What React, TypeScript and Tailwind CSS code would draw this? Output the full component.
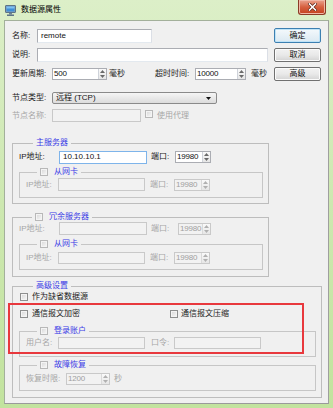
import React from "react";

const Check = ({ disabled = false }: { disabled?: boolean }) => (
  <span
    className={`inline-block w-[8px] h-[8px] shrink-0 border ${
      disabled ? "border-[#b8b8b8]" : "border-[#8e8f8f]"
    } bg-linear-to-br from-[#d6d6d6] to-[#fafafa] shadow-[inset_0_0_0_1px_#f4f4f4]`}
  />
);

const Arrow = ({ up, color }: { up: boolean; color: string }) => (
  <svg width="5" height="3" viewBox="0 0 5 3">
    {up ? <path d="M0 3 L2.5 0 L5 3 Z" fill={color} /> : <path d="M0 0 L2.5 3 L5 0 Z" fill={color} />}
  </svg>
);

const Spin = ({ w, value, disabled = false }: { w: string; value: string; disabled?: boolean }) => (
  <div
    className={`flex h-[12px] border ${w} ${
      disabled ? "border-[#c9c9c9] bg-[#f2f2f2] text-[#a0a0a0]" : "border-[#abadb3] bg-white text-[#111]"
    }`}
  >
    <span className="flex-1 flex items-center pl-[1px] leading-none overflow-hidden whitespace-nowrap tracking-[-0.2px]">{value}</span>
    <span className={`w-[8px] shrink-0 flex flex-col border-l ${disabled ? "border-[#dadada]" : "border-[#cfd3da]"} bg-linear-to-b from-[#fafafa] to-[#e6e6e6]`}>
      <span className="flex-1 flex items-center justify-center">
        <Arrow up color={disabled ? "#b0b0b0" : "#6a6a6a"} />
      </span>
      <span className="flex-1 flex items-center justify-center">
        <Arrow up={false} color={disabled ? "#b0b0b0" : "#6a6a6a"} />
      </span>
    </span>
  </div>
);

const Input = ({ w, h = "h-[13px]", value = "", disabled = false, focus = false }: { w: string; h?: string; value?: string; disabled?: boolean; focus?: boolean }) => (
  <div
    className={`${w} ${h} flex items-center pl-[3px] border leading-none ${
      disabled
        ? "border-[#c9c9c9] bg-[#f2f2f2]"
        : focus
        ? "border-[#7eb4ea] bg-white text-[#111]"
        : "border-[#abadb3] border-b-[#e3e9ef] border-r-[#dbdfe6] bg-white text-[#111]"
    }`}
  >
    {value}
  </div>
);

const Btn = ({ label, h, primary = false }: { label: string; h: string; primary?: boolean }) => (
  <div
    className={`ml-auto w-[47px] ${h} flex items-center justify-center rounded-[2px] border leading-none text-[#111] ${
      primary
        ? "border-[#3c7fb1] shadow-[inset_0_0_0_1px_#bfe3f7] bg-linear-to-b from-[#f4f9fc] to-[#dbe9f2]"
        : "border-[#707070] shadow-[inset_0_0_0_1px_#fbfbfb] bg-linear-to-b from-[#f2f2f2] via-[#e9e9e9] to-[#d3d3d3]"
    }`}
  >
    {label}
  </div>
);

const Label = ({ w, text, disabled = false }: { w: string; text: string; disabled?: boolean }) => (
  <span className={`${w} shrink-0 leading-none whitespace-nowrap ${disabled ? "text-[#a6a6a6]" : "text-[#1a1a1a]"}`}>{text}</span>
);

export default function App() {
  return (
    <div className="relative w-[333px] h-[408px] flex flex-col overflow-hidden bg-linear-to-b from-[#dcefc8] via-[#cde8b0] to-[#c2e39e] text-[8px] font-['Liberation_Sans','Noto_Sans_CJK_SC',sans-serif]">
      {/* Title bar */}
      <div className="h-[20px] shrink-0 flex items-start">
        <div className="h-[20px] flex items-center pl-[5px] gap-[5px]">
          <svg width="11" height="11" viewBox="0 0 11 11">
            <rect x="0.5" y="0.5" width="10" height="7" rx="0.5" fill="#8aa3b8" stroke="#5d7487" />
            <rect x="1.5" y="1.5" width="8" height="5" fill="#3f8fd6" />
            <rect x="1.5" y="1.5" width="8" height="2" fill="#7fc0ef" />
            <rect x="4" y="8" width="3" height="1.5" fill="#6f8497" />
            <rect x="2" y="9.5" width="7" height="1.5" fill="#5d7487" />
          </svg>
          <span className="leading-none text-black">数据源属性</span>
        </div>
        <div className="ml-auto mr-[7px] w-[28px] h-[15px] rounded-b-[3px] border border-t-0 border-[#8b3a27] bg-linear-to-b from-[#e9a38f] via-[#d6603f] to-[#c4401f] shadow-[inset_0_0_0_1px_#f0b7a6] flex items-center justify-center">
          <svg width="9" height="8" viewBox="0 0 9 8">
            <path d="M1.5 1 L7.5 7 M7.5 1 L1.5 7" stroke="#5a2215" strokeWidth="3" strokeLinecap="square" />
            <path d="M1.5 1 L7.5 7 M7.5 1 L1.5 7" stroke="#ffffff" strokeWidth="1.6" strokeLinecap="square" />
          </svg>
        </div>
      </div>

      {/* Client area */}
      <div className="mx-[4px] h-[384px] shrink-0 border border-[#a3b09b] border-b-[#9a9a9a] border-r-[#9f9f9f] bg-[#f0f0f0] px-[7px] flex flex-col">
        {/* Row 1 */}
        <div className="mt-[7px] h-[15px] flex items-center">
          <Label w="w-[25px]" text="名称:" />
          <Input w="w-[115px]" h="h-[14px]" value="remote" />
          <Btn label="确定" h="h-[15px]" primary />
        </div>
        {/* Row 2 */}
        <div className="mt-[5px] h-[14px] flex items-center">
          <Label w="w-[25px]" text="说明:" />
          <Input w="w-[231px]" h="h-[14px]" />
          <Btn label="取消" h="h-[14px]" />
        </div>
        {/* Row 3 */}
        <div className="mt-[5px] h-[14px] flex items-center">
          <div className="w-[143px] flex items-center shrink-0">
            <Label w="w-[40px]" text="更新周期:" />
            <Spin w="w-[55px]" value="500" />
            <span className="ml-[2px] leading-none text-[#1a1a1a]">毫秒</span>
          </div>
          <Label w="w-[40px]" text="超时时间:" />
          <Spin w="w-[51px]" value="10000" />
          <span className="ml-[5px] leading-none text-[#1a1a1a]">毫秒</span>
          <Btn label="高级" h="h-[14px]" />
        </div>
        {/* Row 4 */}
        <div className="mt-[11px] h-[12px] flex items-center">
          <Label w="w-[40px]" text="节点类型:" />
          <div className="w-[165px] h-[12px] flex items-center justify-between pl-[3px] pr-[5px] rounded-[2px] border border-[#8a8a8a] bg-linear-to-b from-[#f5f5f5] to-[#dcdcdc] text-[#111] leading-none">
            <span>远程 (TCP)</span>
            <svg width="5" height="3" viewBox="0 0 5 3">
              <path d="M0 0 L2.5 3 L5 0 Z" fill="#111" />
            </svg>
          </div>
        </div>
        {/* Row 5 */}
        <div className="mt-[5px] h-[13px] flex items-center">
          <Label w="w-[40px]" text="节点名称:" disabled />
          <Input w="w-[89px]" h="h-[13px]" disabled />
          <span className="ml-[4px]">
            <Check disabled />
          </span>
          <span className="ml-[4px] leading-none text-[#a6a6a6]">使用代理</span>
        </div>

        {/* 主服务器 */}
        <fieldset className="mt-[16px] w-[257px] border border-[#bdbdbd] pl-[6px] pr-[5px] pt-[3px] pb-[5px]">
          <legend className="ml-[14px] px-[3px] h-[10px] leading-[10px] text-[#3c3ce6]">主服务器</legend>
          <div className="h-[12px] flex items-center">
            <Label w="w-[40px]" text="IP地址:" />
            <Input w="w-[88px]" h="h-[13px]" value="10.10.10.1" focus />
            <Label w="w-[24px] ml-[4px]" text="端口:" />
            <Spin w="w-[36px]" value="19980" />
          </div>
          <fieldset className="mt-[4px] w-[244px] border border-[#c6c6c6] pl-[6px] pt-[1px] pb-[6px]">
            <legend className="ml-[11px] px-[3px]">
              <div className="h-[10px] flex items-center gap-[6px]">
                <Check disabled />
                <span className="leading-none text-[#3c3ce6]">从网卡</span>
              </div>
            </legend>
            <div className="h-[13px] flex items-center">
              <Label w="w-[32px]" text="IP地址:" disabled />
              <Input w="w-[87px]" h="h-[13px]" disabled />
              <Label w="w-[24px] ml-[5px]" text="端口:" disabled />
              <Spin w="w-[36px]" value="19980" disabled />
            </div>
          </fieldset>
        </fieldset>

        {/* 冗余服务器 */}
        <fieldset className="mt-[8px] w-[257px] border border-[#bdbdbd] pl-[6px] pr-[5px] pt-0 pb-[6px]">
          <legend className="ml-[13px] px-[3px]">
            <div className="h-[10px] flex items-center gap-[6px]">
              <Check disabled />
              <span className="leading-none text-[#3c3ce6]">冗余服务器</span>
            </div>
          </legend>
          <div className="h-[13px] flex items-center">
            <Label w="w-[40px]" text="IP地址:" disabled />
            <Input w="w-[88px]" h="h-[13px]" disabled />
            <Label w="w-[27px] ml-[4px]" text="端口:" disabled />
            <Spin w="w-[33px]" value="19980" disabled />
          </div>
          <fieldset className="mt-[4px] w-[244px] border border-[#c6c6c6] pl-[6px] pt-[3px] pb-[5px]">
            <legend className="ml-[11px] px-[3px]">
              <div className="h-[10px] flex items-center gap-[6px]">
                <Check disabled />
                <span className="leading-none text-[#3c3ce6]">从网卡</span>
              </div>
            </legend>
            <div className="h-[12px] flex items-center">
              <Label w="w-[32px]" text="IP地址:" disabled />
              <Input w="w-[87px]" h="h-[12px]" disabled />
              <Label w="w-[24px] ml-[5px]" text="端口:" disabled />
              <Spin w="w-[36px]" value="19980" disabled />
            </div>
          </fieldset>
        </fieldset>

        {/* 高级设置 */}
        <fieldset className="mt-[4px] w-[310px] border border-[#bdbdbd] pl-[6px] pr-[5px] pt-[1px] pb-[6px]">
          <legend className="ml-[14px] px-[3px] h-[10px] leading-[10px] text-[#3c3ce6]">高级设置</legend>
          <div className="h-[10px] flex items-center pl-[1px] gap-[4px]">
            <Check />
            <span className="leading-none text-[#1a1a1a]">作为缺省数据源</span>
          </div>
          <div className="mt-[7px] h-[10px] flex items-center pl-[1px]">
            <div className="w-[150px] flex items-center gap-[4px]">
              <Check />
              <span className="leading-none text-[#1a1a1a]">通信报文加密</span>
            </div>
            <div className="flex items-center gap-[3px]">
              <Check />
              <span className="leading-none text-[#1a1a1a]">通信报文压缩</span>
            </div>
          </div>
          <fieldset className="mt-[7px] w-[297px] border border-[#c6c6c6] pl-[6px] pt-[1px] pb-[7px]">
            <legend className="ml-[11px] px-[3px]">
              <div className="h-[10px] flex items-center gap-[6px]">
                <Check disabled />
                <span className="leading-none text-[#3c3ce6]">登录账户</span>
              </div>
            </legend>
            <div className="h-[12px] flex items-center">
              <Label w="w-[32px]" text="用户名:" disabled />
              <Input w="w-[87px]" h="h-[12px]" disabled />
              <Label w="w-[23px] ml-[6px]" text="口令:" disabled />
              <Input w="w-[87px]" h="h-[12px]" disabled />
            </div>
          </fieldset>
          <fieldset className="mt-[3px] w-[297px] border border-[#c6c6c6] pl-[6px] pt-[3px] pb-[6px]">
            <legend className="ml-[11px] px-[3px]">
              <div className="h-[10px] flex items-center gap-[6px]">
                <Check disabled />
                <span className="leading-none text-[#3c3ce6]">故障恢复</span>
              </div>
            </legend>
            <div className="h-[11px] flex items-center">
              <Label w="w-[40px]" text="恢复时限:" disabled />
              <Spin w="w-[44px]" value="1200" disabled />
              <span className="ml-[4px] leading-none text-[#a6a6a6]">秒</span>
            </div>
          </fieldset>
        </fieldset>
      </div>

      {/* Red annotation box */}
      <div className="absolute left-[8px] top-[303px] w-[296px] h-[51px] border-2 border-[#e8383d] pointer-events-none" />
    </div>
  );
}
